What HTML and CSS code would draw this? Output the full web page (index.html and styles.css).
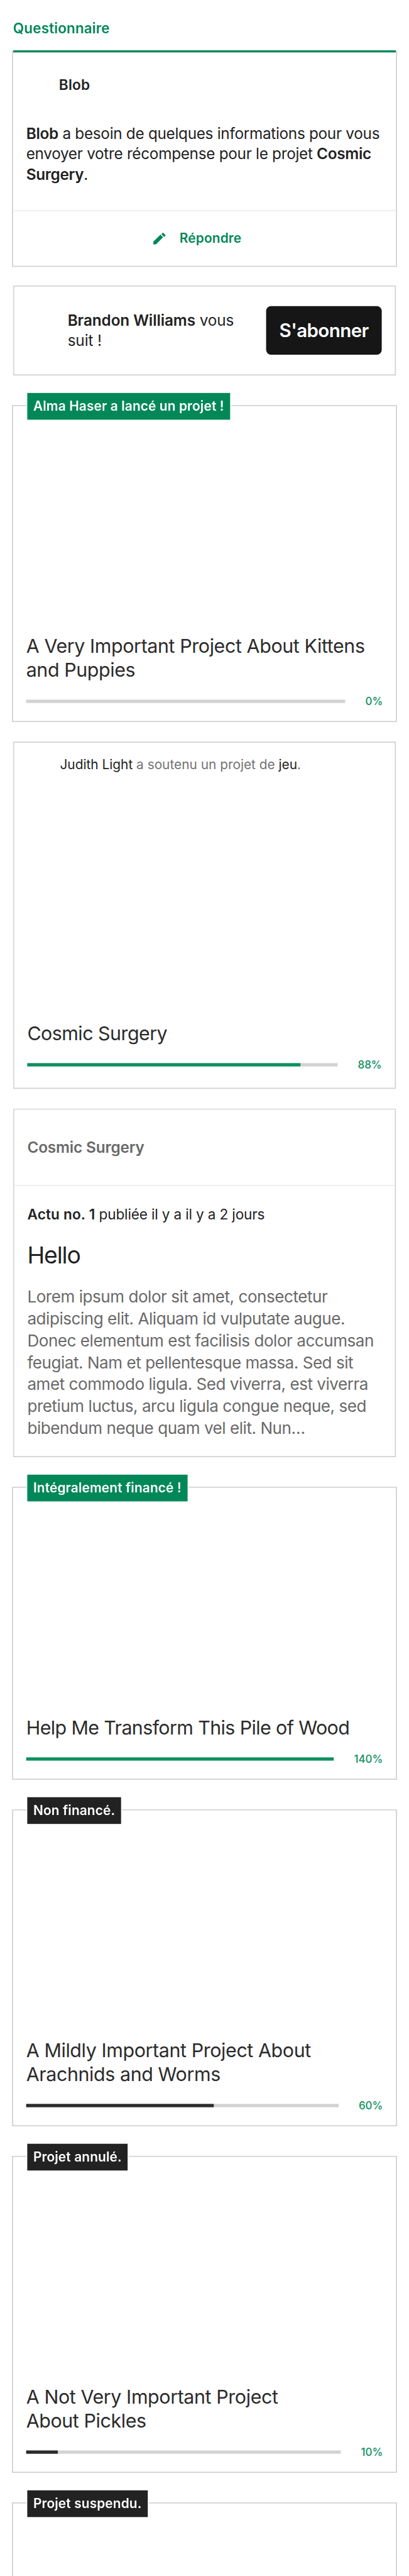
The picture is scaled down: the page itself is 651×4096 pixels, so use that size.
FILE: index.html
```
<!DOCTYPE html>
<html lang="fr">
<head>
<meta charset="utf-8">
<title>Activité</title>
<link rel="stylesheet" href="styles.css">
</head>
<body>
<div class="viewport">
<main class="screen">
  <h1 class="section-title">Questionnaire</h1>

  <section class="card survey">
    <header class="survey-head">
      <span class="avatar"></span>
      <span class="survey-name">Blob</span>
    </header>
    <p class="survey-text"><b>Blob</b> a besoin de quelques informations pour vous envoyer votre récompense pour le projet <b>Cosmic Surgery</b>.</p>
    <div class="survey-action">
      <svg class="pencil" viewBox="0 0 23 22" width="23" height="22"><path d="M0 22v-5.3L13.4 3.8l4.7 4.9L4.9 22zM15 2.9L17.9 0 23 5.2l-3 2.9z"/></svg>
      <span>Répondre</span>
    </div>
  </section>

  <section class="card card--narrow follow">
    <span class="avatar avatar--follow"></span>
    <p class="follow-text"><b>Brandon Williams</b> vous suit&nbsp;!</p>
    <button class="follow-button">S'abonner</button>
  </section>

  <section class="card card--tagged">
    <span class="tag">Alma Haser a lancé un projet !</span>
    <div class="media"></div>
    <div class="project">
      <h2 class="title">A Very Important Project About Kittens and Puppies</h2>
      <div class="funding"><div class="bar"><div class="fill" style="width:0%"></div></div><span class="percent">0%</span></div>
    </div>
  </section>

  <section class="card card--narrow">
    <header class="backing">
      <span class="avatar avatar--small"></span>
      <p class="backing-text"><em>Judith Light</em> a soutenu un projet de <em>jeu</em>.</p>
    </header>
    <div class="media media--backing"></div>
    <div class="project project--backing">
      <h2 class="title title--single title--loose">Cosmic Surgery</h2>
      <div class="funding"><div class="bar"><div class="fill" style="width:88%"></div></div><span class="percent">88%</span></div>
    </div>
  </section>

  <section class="card card--narrow">
    <header class="update-head">Cosmic Surgery</header>
    <div class="update">
      <p class="update-meta"><b>Actu no. 1</b> publiée il y a il y a 2 jours</p>
      <h2 class="update-title">Hello</h2>
      <p class="update-body">Lorem ipsum dolor sit amet, consectetur adipiscing elit. Aliquam id vulputate augue. Donec elementum est facilisis dolor accumsan feugiat. Nam et pellentesque massa. Sed sit amet commodo ligula. Sed viverra, est viverra pretium luctus, arcu ligula congue neque, sed bibendum neque quam vel elit. Nun…</p>
    </div>
  </section>

  <section class="card card--tagged">
    <span class="tag">Intégralement financé !</span>
    <div class="media"></div>
    <div class="project">
      <h2 class="title title--single title--tight">Help Me Transform This Pile of Wood</h2>
      <div class="funding"><div class="bar"><div class="fill" style="width:100%"></div></div><span class="percent">140%</span></div>
    </div>
  </section>

  <section class="card card--tagged">
    <span class="tag tag--dark">Non financé.</span>
    <div class="media"></div>
    <div class="project">
      <h2 class="title">A Mildly Important Project About<br>Arachnids and Worms</h2>
      <div class="funding"><div class="bar"><div class="fill fill--dark" style="width:60%"></div></div><span class="percent">60%</span></div>
    </div>
  </section>

  <section class="card card--tagged">
    <span class="tag tag--dark">Projet annulé.</span>
    <div class="media"></div>
    <div class="project">
      <h2 class="title">A Not Very Important Project<br>About Pickles</h2>
      <div class="funding"><div class="bar"><div class="fill fill--dark" style="width:10%"></div></div><span class="percent">10%</span></div>
    </div>
  </section>

  <section class="card card--tagged card--cut">
    <span class="tag tag--dark">Projet suspendu.</span>
  </section>
</main>
</div>
</body>
</html>
```
FILE: styles.css
```
* { box-sizing: border-box; margin: 0; padding: 0; }

body { background: #fff; }

.viewport {
  width: 651px;
  height: 4096px;
  overflow: hidden;
  contain: strict;
}

/* Laid out on a 750-unit grid, then fitted to the viewport. */
.screen {
  width: 750px;
  height: 4720px;
  padding: 34px 22px 0;
  transform: scale(.868, .8678);
  transform-origin: 0 0;
  font-family: Inter, "Liberation Sans", sans-serif;
  color: #222;
}

b { font-weight: 600; }

.section-title {
  margin: 0 0 24px 2px;
  font-size: 26px;
  line-height: 36px;
  font-weight: 600;
  letter-spacing: .09px;
  color: #028858;
}

.card { position: relative; border: 2px solid #d1d1d1; background: #fff; }
.card--narrow { margin: 36px 2px 0; }
.card--tagged { margin-top: 54px; }
.card--cut { height: 135px; border-bottom: 0; }

.avatar { flex: none; width: 48px; height: 49px; }
.avatar--follow { width: 60px; height: 60px; }
.avatar--small { height: 30px; }

/* Survey */
.survey::before {
  content: "";
  position: absolute;
  top: -4px;
  left: 0;
  right: 0;
  height: 4px;
  background: #028858;
}
.survey-head { display: flex; align-items: center; gap: 12px; padding: 35px 24px; }
.survey-name { font-size: 26px; line-height: 36px; font-weight: 600; letter-spacing: .3px; }
.survey-text { padding: 12px 24px 47px; font-size: 28px; line-height: 37px; letter-spacing: -.33px; }
.survey-action {
  display: flex;
  align-items: center;
  justify-content: center;
  gap: 25px;
  height: 102px;
  padding-right: 26px;
  border-top: 2px solid #ecedf2;
  font-size: 24px;
  line-height: 30px;
  font-weight: 600;
  letter-spacing: .2px;
  color: #028858;
}
.pencil { display: block; fill: #028858; }

/* Follow */
.follow { display: flex; align-items: center; height: 165px; margin-top: 34px; padding: 0 24px; }
.follow-text { flex: 1; margin-left: 14px; padding-right: 36px; font-size: 28px; line-height: 37px; letter-spacing: -.1px; }
.follow-button {
  width: 212px;
  height: 89px;
  border: 0;
  border-radius: 9px;
  background: #161616;
  color: #fff;
  font: 600 34px/40px Inter, "Liberation Sans", sans-serif;
  letter-spacing: -.68px;
}

/* Project cards */
.tag {
  position: absolute;
  top: -24px;
  left: 26px;
  height: 49px;
  padding: 0 11px;
  background: #028858;
  box-shadow: 0 0 0 2px #fff;
  color: #fff;
  font-size: 24px;
  line-height: 49px;
  font-weight: 600;
  letter-spacing: .15px;
  white-space: nowrap;
}
.tag--dark { background: #222; }
.media { height: 394px; }
.media--backing { height: 395px; }
.project { padding: 24px; }
.project--backing { padding-bottom: 30px; }
.title { font-size: 35px; line-height: 43.5px; font-weight: 400; letter-spacing: -.45px; color: #2b2b2b; }
.title--single { line-height: 43px; }
.title--tight { letter-spacing: -.7px; }
.title--loose { letter-spacing: -.6px; }
.funding { display: flex; align-items: center; gap: 37px; height: 24px; margin-top: 24px; }
.bar { flex: 1; height: 6px; background: #d2d2d2; }
.fill { height: 6px; background: #0d9060; }
.fill--dark { background: #2b2b2b; }
.percent { font-size: 19.5px; line-height: 24px; font-weight: 500; color: #0d9060; }

.backing { display: flex; gap: 12px; padding: 25px 24px 37px; }
.backing-text { font-size: 24px; line-height: 30px; color: #737373; }
.backing-text em { font-style: normal; color: #222; }

/* Update */
.update-head {
  display: flex;
  align-items: center;
  height: 140px;
  padding: 0 24px;
  border-bottom: 2px solid #ecedf2;
  font-size: 28px;
  line-height: 36px;
  font-weight: 600;
  letter-spacing: -.16px;
  color: #696969;
}
.update { padding: 33.5px 24px 32px; }
.update-meta { font-size: 26px; line-height: 36px; letter-spacing: -.17px; }
.update-meta b { letter-spacing: .2px; }
.update-title { margin-top: 29.5px; font-size: 43px; line-height: 54px; font-weight: 400; letter-spacing: -1.3px; }
.update-body { margin-top: 30px; font-size: 30px; line-height: 40px; letter-spacing: -.53px; color: #696969; }
```
